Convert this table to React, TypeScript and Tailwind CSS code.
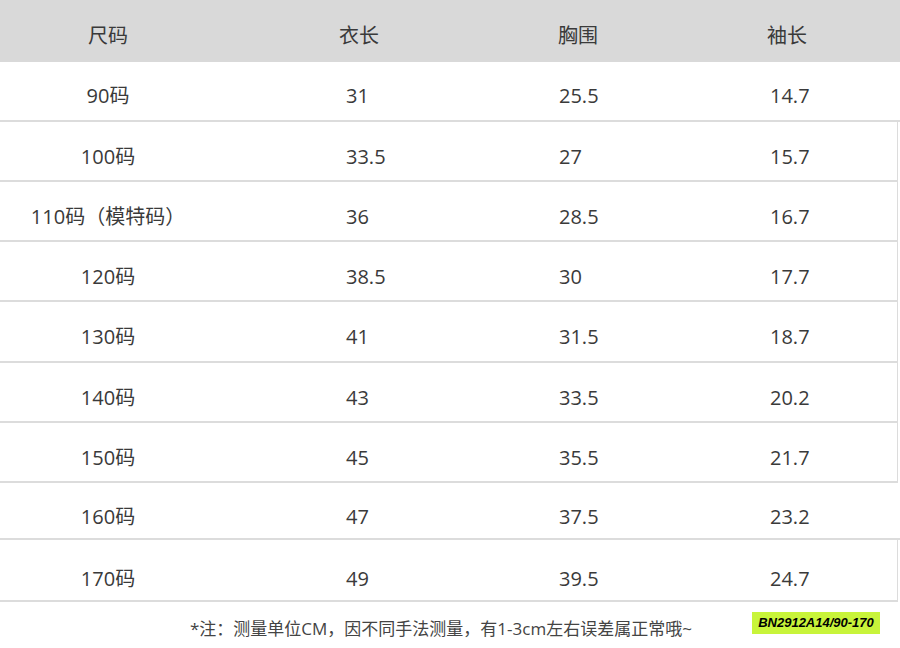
const rows = [
  { size: "90码", len: "31", chest: "25.5", sleeve: "14.7", h: "h-[60px] pt-[10px]", edge: false },
  { size: "100码", len: "33.5", chest: "27", sleeve: "15.7", h: "h-[60px] pt-[11px]", edge: true },
  { size: "110码（模特码）", len: "36", chest: "28.5", sleeve: "16.7", h: "h-[60px] pt-[11px]", edge: true },
  { size: "120码", len: "38.5", chest: "30", sleeve: "17.7", h: "h-[60px] pt-[11px]", edge: true },
  { size: "130码", len: "41", chest: "31.5", sleeve: "18.7", h: "h-[61px] pt-[11px]", edge: true },
  { size: "140码", len: "43", chest: "33.5", sleeve: "20.2", h: "h-[60px] pt-[11px]", edge: true },
  { size: "150码", len: "45", chest: "35.5", sleeve: "21.7", h: "h-[60px] pt-[11px]", edge: true },
  { size: "160码", len: "47", chest: "37.5", sleeve: "23.2", h: "h-[57px] pt-[12px]", edge: false },
  { size: "170码", len: "49", chest: "39.5", sleeve: "24.7", h: "h-[62px] pt-[18px]", edge: true },
];

export default function App() {
  return (
    <div
      className="w-[900px] h-[648px] bg-white text-[#3a3a3a] overflow-hidden"
      style={{ fontFamily: '"Open Sans", "Noto Sans CJK SC", sans-serif' }}
    >
      {/* 表头 */}
      <div className="flex h-[62px] items-center bg-[#d9d9d9] pt-[10px] text-[20px]">
        <div className="w-[216px] text-center">尺码</div>
        <div className="w-[334px] pl-[123px]">衣长</div>
        <div className="w-[210px] pl-[8px]">胸围</div>
        <div className="flex-1 pl-[7px]">袖长</div>
      </div>

      {rows.map((r) => (
        <div
          key={r.size}
          className={`flex ${r.h} items-center border-b-2 border-[#dcdcdc] text-[20px] ${
            r.edge ? "border-r border-r-[#dcdcdc] mr-[2px]" : ""
          }`}
        >
          <div className="w-[216px] text-center">{r.size}</div>
          <div className="w-[334px] pl-[130px]">{r.len}</div>
          <div className="w-[210px] pl-[9px]">{r.chest}</div>
          <div className="flex-1 pl-[10px]">{r.sleeve}</div>
        </div>
      ))}

      {/* 底部说明 */}
      <div className="flex h-[46px] items-start pl-[190px] pr-[20px]">
        <div className="pt-[16px] text-[17px] leading-[22px] text-[#444]">
          *注：测量单位CM，因不同手法测量，有1-3cm左右误差属正常哦~
        </div>
        <div
          className="ml-auto mt-[10px] flex h-[22px] w-[128px] items-center justify-center bg-[#c8f43a] text-[13px] font-bold italic text-black"
          style={{ fontFamily: '"Liberation Sans", sans-serif' }}
        >
          BN2912A14/90-170
        </div>
      </div>
    </div>
  );
}
